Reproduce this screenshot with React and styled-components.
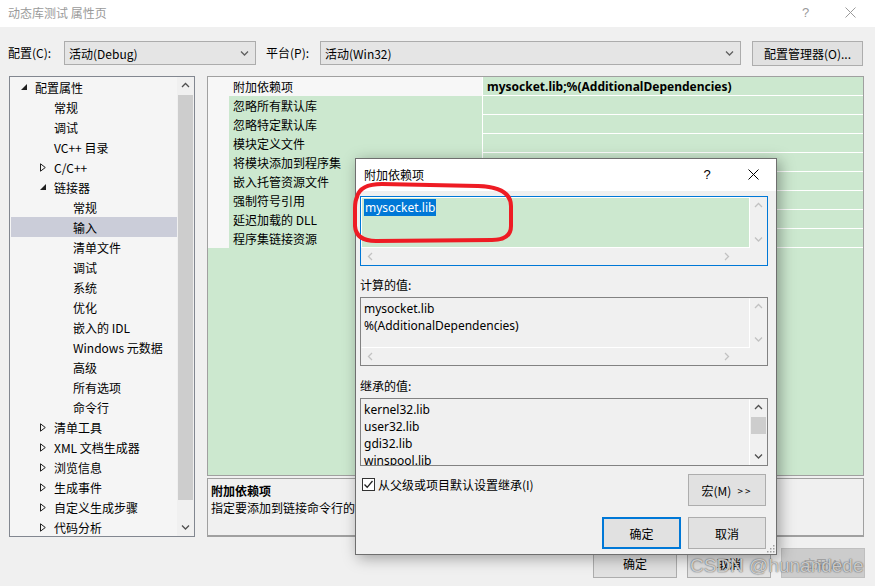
import React from "react";
import styled, { createGlobalStyle } from "styled-components";

const GlobalStyle = createGlobalStyle`
  html, body { margin: 0; padding: 0; }
  body {
    background: #f0f0f0;
    font-family: "Microsoft YaHei UI", "Noto Sans CJK SC", "Noto Sans", sans-serif;
    font-size: 12px;
    color: #000;
  }
  * { box-sizing: border-box; }
`;

const GREEN = "#cce8cf";

const Window = styled.div`
  position: relative;
  width: 875px;
  height: 586px;
  overflow: hidden;
  background: #f0f0f0;
  display: flex;
  flex-direction: column;
`;

const TitleBar = styled.div`
  height: ${(p) => p.$h || 27}px;
  flex: none;
  background: #fff;
  display: flex;
  align-items: center;
  padding-left: 8px;
  padding-bottom: ${(p) => p.$pb || 2}px;
  color: ${(p) => (p.$inactive ? "#9a9a9a" : "#000")};
  font-size: 12px;
`;

const TitleText = styled.span`
  flex: 1;
  white-space: nowrap;
`;

const CaptionButton = styled.div`
  width: ${(p) => p.$w || 45}px;
  height: 100%;
  display: flex;
  align-items: center;
  justify-content: center;
  font-size: 13px;
  font-family: "Liberation Sans", sans-serif;
  color: ${(p) => (p.$inactive ? "#9a9a9a" : "#000")};
`;

const Toolbar = styled.div`
  height: 49px;
  flex: none;
  display: flex;
  align-items: flex-start;
  padding: 14px 0 0 8px;
`;

const FieldLabel = styled.div`
  width: ${(p) => p.$w}px;
  height: 24px;
  line-height: 24px;
  flex: none;
  margin-left: ${(p) => p.$ml || 0}px;
`;

const Combo = styled.div`
  width: ${(p) => p.$w}px;
  height: 24px;
  flex: none;
  background: #e5e5e5;
  border: 1px solid #acacac;
  display: flex;
  align-items: center;
  padding: 0 6px 0 4px;
  span { flex: 1; }
`;

const PushButton = styled.div`
  width: ${(p) => p.$w}px;
  height: ${(p) => p.$h}px;
  flex: none;
  margin-left: ${(p) => p.$ml || 0}px;
  background: ${(p) => (p.$disabled ? "#cccccc" : "#e1e1e1")};
  border: ${(p) => (p.$primary ? "2px solid #0078d7" : p.$disabled ? "1px solid #bfbfbf" : "1px solid #adadad")};
  color: ${(p) => (p.$disabled ? "#a0a0a0" : "#000")};
  display: flex;
  align-items: center;
  justify-content: center;
  white-space: nowrap;
`;

const Arrows = styled.span`
  font-size: 10px;
  letter-spacing: 2px;
  margin-left: 6px;
`;

const Main = styled.div`
  height: 461px;
  flex: none;
  display: flex;
  padding: 0 11px 0 9px;
  gap: 12px;
`;

const Tree = styled.div`
  width: 186px;
  flex: none;
  border: 1px solid #828790;
  background: #f5f5f5;
  display: flex;
`;

const TreeList = styled.div`
  flex: 1;
  padding-left: 1px;
  overflow: hidden;
`;

const TreeRow = styled.div`
  height: 20px;
  display: flex;
  align-items: center;
  padding-left: ${(p) => p.$level * 19}px;
  background: ${(p) => (p.$selected ? "#cbcdd9" : "transparent")};
  white-space: nowrap;
`;

const ArrowSlot = styled.div`
  width: 24px;
  flex: none;
  display: flex;
  align-items: center;
  justify-content: center;
  padding-left: 1px;
`;

const VScroll = styled.div`
  width: 17px;
  flex: none;
  background: #f0f0f0;
  display: flex;
  flex-direction: column;
`;

const ScrollArrow = styled.div`
  height: 17px;
  flex: none;
  display: flex;
  align-items: center;
  justify-content: center;
`;

const Thumb = styled.div`
  height: ${(p) => p.$h}px;
  flex: none;
  margin: 1px 1px 0;
  background: #cdcdcd;
`;

const Spacer = styled.div`
  flex: 1;
`;

const RightCol = styled.div`
  flex: 1;
  display: flex;
  flex-direction: column;
  gap: 2px;
`;

const Grid = styled.div`
  height: 400px;
  flex: none;
  border: 1px solid #a0a0a0;
  background: ${GREEN};
`;

const GridRow = styled.div`
  height: 19px;
  display: grid;
  grid-template-columns: 21px 253px 1fr;
  border-bottom: 1px solid #fff;
  line-height: 19px;
`;

const Gutter = styled.div`
  background: #f7f7f7;
`;

const NameCell = styled.div`
  padding-left: 4px;
  background: ${(p) => (p.$selected ? "#f7f7f7" : GREEN)};
  white-space: nowrap;
`;

const ValueCell = styled.div`
  border-left: 1px solid #fff;
  padding-left: 4px;
  font-weight: bold;
  white-space: nowrap;
  font-family: "Microsoft YaHei UI", "Noto Sans", sans-serif;
`;

const Desc = styled.div`
  flex: 1;
  border: 1px solid #a0a0a0;
  border-bottom: 2px solid #a0a0a0;
  background: #f0f0f0;
  padding: 3px 3px;
  line-height: 17px;
  b { display: block; }
`;

const Footer = styled.div`
  display: flex;
  justify-content: flex-end;
  gap: 10px;
  padding: 11px 10px 0 0;
`;

/* dialog */

const Dialog = styled.div`
  position: absolute;
  left: 355px;
  top: 158px;
  width: 422px;
  height: 397px;
  border: 1px solid #6f6f6f;
  background: #f0f0f0;
  box-shadow: 3px 3px 14px rgba(0, 0, 0, 0.35);
  display: flex;
  flex-direction: column;
`;

const DialogBody = styled.div`
  flex: 1;
  display: flex;
  flex-direction: column;
  padding: 5px 8px 0 4px;
  position: relative;
`;

const Box = styled.div`
  height: ${(p) => p.$h}px;
  flex: none;
  border: 1px solid ${(p) => (p.$focused ? "#0078d7" : "#828282")};
  display: grid;
  grid-template-columns: 1fr 17px;
  grid-template-rows: ${(p) => (p.$hscroll ? "1fr 17px" : "1fr")};
  background: #f0f0f0;
  overflow: hidden;
`;

const BoxContent = styled.div`
  background: ${(p) => (p.$green ? GREEN : "#f0f0f0")};
  border: 1px solid #fff;
  border-top-color: ${(p) => (p.$green ? "#fff" : "#f0f0f0")};
  border-left-color: ${(p) => (p.$green ? "#fff" : "#f0f0f0")};
  border-bottom-width: ${(p) => (p.$hscroll ? 1 : 0)}px;
  padding: 1px 2px;
  line-height: 17px;
  overflow: hidden;
  font-family: "Microsoft YaHei UI", "Noto Sans", "Noto Sans CJK SC", sans-serif;
  div { white-space: nowrap; }
`;

const Selected = styled.span`
  background: #0078d7;
  color: #fff;
  padding: 0 1px;
`;

const BoxVScroll = styled.div`
  display: flex;
  flex-direction: column;
  justify-content: space-between;
`;

const HScroll = styled.div`
  display: flex;
  align-items: center;
  justify-content: space-between;
  padding: 0 20px 0 6px;
`;

const Corner = styled.div``;

const SectionLabel = styled.div`
  line-height: 17px;
  margin: ${(p) => p.$mt}px 0 4px;
`;

const CheckRow = styled.div`
  display: flex;
  align-items: flex-start;
  margin-top: 8px;
  padding-right: 2px;
`;

const CheckLabel = styled.label`
  flex: 1;
  display: flex;
  align-items: center;
  gap: 3px;
  padding: 2px 0 0 2px;
  line-height: 17px;
`;

const CheckBox = styled.span`
  width: 13px;
  height: 13px;
  border: 1px solid #333;
  background: #fff;
  display: inline-flex;
  align-items: center;
  justify-content: center;
`;

const ButtonRow = styled.div`
  display: flex;
  justify-content: flex-end;
  gap: 7px;
  margin-top: 11px;
  padding-right: 2px;
`;

const Grip = styled.svg`
  position: absolute;
  right: 1px;
  bottom: 1px;
`;

const Overlay = styled.svg`
  position: absolute;
  left: 0;
  top: 0;
  pointer-events: none;
`;

const Watermark = styled.div`
  position: absolute;
  left: 690px;
  top: 555px;
  font-family: "Liberation Sans", Arial, sans-serif;
  font-size: 19px;
  color: rgba(255, 255, 255, 0.7);
  text-shadow: 0 0 1px rgba(60, 60, 60, 0.9), 0 0 2px rgba(0, 0, 0, 0.3);
  pointer-events: none;
  white-space: nowrap;
`;

/* icons */

const Chevron = ({ dir = "down", color = "#606060" }) => {
  const paths = {
    down: "M1 1.5 L4.5 5 L8 1.5",
    up: "M1 5 L4.5 1.5 L8 5",
    left: "M5 1 L1.5 4.5 L5 8",
    right: "M2 1 L5.5 4.5 L2 8",
  };
  const horizontal = dir === "left" || dir === "right";
  return (
    <svg width={horizontal ? 7 : 9} height={horizontal ? 9 : 7} viewBox={horizontal ? "0 0 7 9" : "0 0 9 7"}>
      <path d={paths[dir]} fill="none" stroke={color} strokeWidth="1.3" />
    </svg>
  );
};

const CloseIcon = ({ color = "#000", size = 11 }) => (
  <svg width={size} height={size} viewBox="0 0 11 11">
    <path d="M0.5 0.5 L10.5 10.5 M10.5 0.5 L0.5 10.5" stroke={color} strokeWidth="1" />
  </svg>
);

const Expanded = () => (
  <svg width="6" height="6" viewBox="0 0 6 6">
    <path d="M6 0 L6 6 L0 6 Z" fill="#1e1e1e" />
  </svg>
);

const Collapsed = () => (
  <svg width="6" height="9" viewBox="0 0 6 9">
    <path d="M0.5 0.8 L5.3 4.5 L0.5 8.2 Z" fill="none" stroke="#1e1e1e" strokeWidth="1" />
  </svg>
);

const CheckMark = () => (
  <svg width="11" height="11" viewBox="0 0 11 11">
    <path d="M1.5 5.5 L4.2 8.3 L9.5 2" fill="none" stroke="#222" strokeWidth="1.3" />
  </svg>
);

/* data */

const treeItems = [
  { text: "配置属性", level: 0, arrow: "open" },
  { text: "常规", level: 1 },
  { text: "调试", level: 1 },
  { text: "VC++ 目录", level: 1 },
  { text: "C/C++", level: 1, arrow: "closed" },
  { text: "链接器", level: 1, arrow: "open" },
  { text: "常规", level: 2 },
  { text: "输入", level: 2, selected: true },
  { text: "清单文件", level: 2 },
  { text: "调试", level: 2 },
  { text: "系统", level: 2 },
  { text: "优化", level: 2 },
  { text: "嵌入的 IDL", level: 2 },
  { text: "Windows 元数据", level: 2 },
  { text: "高级", level: 2 },
  { text: "所有选项", level: 2 },
  { text: "命令行", level: 2 },
  { text: "清单工具", level: 1, arrow: "closed" },
  { text: "XML 文档生成器", level: 1, arrow: "closed" },
  { text: "浏览信息", level: 1, arrow: "closed" },
  { text: "生成事件", level: 1, arrow: "closed" },
  { text: "自定义生成步骤", level: 1, arrow: "closed" },
  { text: "代码分析", level: 1, arrow: "closed" },
];

const gridRows = [
  { name: "附加依赖项", value: "mysocket.lib;%(AdditionalDependencies)", selected: true },
  { name: "忽略所有默认库" },
  { name: "忽略特定默认库" },
  { name: "模块定义文件" },
  { name: "将模块添加到程序集" },
  { name: "嵌入托管资源文件" },
  { name: "强制符号引用" },
  { name: "延迟加载的 DLL" },
  { name: "程序集链接资源" },
];

const ScrollBox = ({ h, focused, green, hscroll, dark, thumb, children }) => {
  const c = dark ? "#505050" : "#c2c2c2";
  return (
    <Box $h={h} $focused={focused} $hscroll={hscroll}>
      <BoxContent $green={green} $hscroll={hscroll}>{children}</BoxContent>
      <BoxVScroll>
        <ScrollArrow><Chevron dir="up" color={c} /></ScrollArrow>
        {thumb && <Thumb $h={17} />}
        <Spacer />
        <ScrollArrow><Chevron dir="down" color={c} /></ScrollArrow>
      </BoxVScroll>
      {hscroll && (
        <>
          <HScroll>
            <Chevron dir="left" color="#c2c2c2" />
            <Chevron dir="right" color="#c2c2c2" />
          </HScroll>
          <Corner />
        </>
      )}
    </Box>
  );
};

const App = () => {
  return (
    <>
      <GlobalStyle />
      <Window>
        <TitleBar $inactive>
          <TitleText>动态库测试 属性页</TitleText>
          <CaptionButton $inactive>?</CaptionButton>
          <CaptionButton $inactive>
            <CloseIcon color="#9a9a9a" />
          </CaptionButton>
          <div style={{ width: 2 }} />
        </TitleBar>

        <Toolbar>
          <FieldLabel $w={56}>配置(C):</FieldLabel>
          <Combo $w={192}>
            <span>活动(Debug)</span>
            <Chevron />
          </Combo>
          <FieldLabel $w={54} $ml={10}>平台(P):</FieldLabel>
          <Combo $w={421}>
            <span>活动(Win32)</span>
            <Chevron />
          </Combo>
          <PushButton $w={111} $h={25} $ml={11}>配置管理器(O)...</PushButton>
        </Toolbar>

        <Main>
          <Tree>
            <TreeList>
              {treeItems.map((item, i) => (
                <TreeRow key={i} $level={item.level} $selected={item.selected}>
                  <ArrowSlot>
                    {item.arrow === "open" && <Expanded />}
                    {item.arrow === "closed" && <Collapsed />}
                  </ArrowSlot>
                  <span>{item.text}</span>
                </TreeRow>
              ))}
            </TreeList>
            <VScroll>
              <ScrollArrow><Chevron dir="up" color="#505050" /></ScrollArrow>
              <Thumb $h={405} />
              <Spacer />
              <ScrollArrow><Chevron dir="down" color="#505050" /></ScrollArrow>
            </VScroll>
          </Tree>

          <RightCol>
            <Grid>
              {gridRows.map((row, i) => (
                <GridRow key={i}>
                  <Gutter />
                  <NameCell $selected={row.selected}>{row.name}</NameCell>
                  <ValueCell>{row.value}</ValueCell>
                </GridRow>
              ))}
            </Grid>
            <Desc>
              <b>附加依赖项</b>
              指定要添加到链接命令行的附加项，例如 kernel32.lib
            </Desc>
          </RightCol>
        </Main>

        <Footer>
          <PushButton $w={84} $h={30}>确定</PushButton>
          <PushButton $w={84} $h={30}>取消</PushButton>
          <PushButton $w={84} $h={30} $disabled>应用(A)</PushButton>
        </Footer>

        <Dialog>
          <TitleBar $h={32} $pb={0}>
            <TitleText>附加依赖项</TitleText>
            <CaptionButton $w={46}>?</CaptionButton>
            <CaptionButton $w={46}>
              <CloseIcon />
            </CaptionButton>
          </TitleBar>
          <DialogBody>
            <ScrollBox h={70} focused green hscroll>
              <div><Selected>mysocket.lib</Selected></div>
            </ScrollBox>

            <SectionLabel $mt={10}>计算的值:</SectionLabel>
            <ScrollBox h={69} hscroll>
              <div>mysocket.lib</div>
              <div>%(AdditionalDependencies)</div>
            </ScrollBox>

            <SectionLabel $mt={11}>继承的值:</SectionLabel>
            <ScrollBox h={68} dark thumb>
              <div>kernel32.lib</div>
              <div>user32.lib</div>
              <div>gdi32.lib</div>
              <div>winspool.lib</div>
            </ScrollBox>

            <CheckRow>
              <CheckLabel>
                <CheckBox><CheckMark /></CheckBox>
                从父级或项目默认设置继承(I)
              </CheckLabel>
              <PushButton $w={78} $h={32}>宏(M)<Arrows>&gt;&gt;</Arrows></PushButton>
            </CheckRow>

            <ButtonRow>
              <PushButton $w={79} $h={32} $primary>确定</PushButton>
              <PushButton $w={78} $h={32}>取消</PushButton>
            </ButtonRow>

            <Grip width="8" height="8" viewBox="0 0 8 8">
              <g fill="#a0a0a0">
                <rect x="6" y="0" width="1.5" height="1.5" />
                <rect x="3" y="3" width="1.5" height="1.5" />
                <rect x="6" y="3" width="1.5" height="1.5" />
                <rect x="0" y="6" width="1.5" height="1.5" />
                <rect x="3" y="6" width="1.5" height="1.5" />
                <rect x="6" y="6" width="1.5" height="1.5" />
              </g>
            </Grip>
          </DialogBody>
        </Dialog>

        <Overlay width="875" height="586" viewBox="0 0 875 586">
          <path
            d="M357 197 Q360 184 382 184 L478 186 Q511 187 511 206 L511 226 Q511 240 492 240 L376 241 Q356 241 355 226 L355 208 Q355 201 357 197 Z"
            fill="none"
            stroke="#ee1c24"
            strokeWidth="4"
          />
        </Overlay>

        <Watermark>CSDN @hunandede</Watermark>
      </Window>
    </>
  );
};

export default App;
